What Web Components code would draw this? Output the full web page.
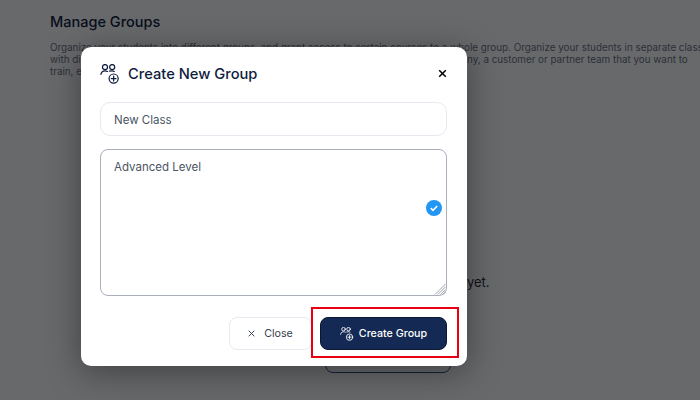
<!DOCTYPE html>
<html>
<head>
<meta charset="utf-8">
<title>Create New Group</title>
<style>
  html, body { margin: 0; height: 100%; }
  body { width: 700px; height: 400px; overflow: hidden; font-family: Inter, "Liberation Sans", sans-serif; }
</style>
</head>
<body>
<groups-page>
  <group-modal heading="Create New Group">
    <text-box>New Class</text-box>
    <text-box multiline>Advanced Level</text-box>
    <modal-button slot="footer" kind="ghost">Close</modal-button>
    <modal-button slot="footer" kind="primary">Create Group</modal-button>
  </group-modal>
</groups-page>

<script>
const groupIcon = `
  <svg viewBox="0 0 22 22" fill="none" stroke="currentColor" stroke-width="1.35" stroke-linecap="round">
    <circle cx="5.500" cy="3.400" r="2.800"/>
    <circle cx="13.400" cy="3.400" r="2.800"/>
    <path d="M1 11.500c.5-2.600 2-4 4.500-4 1.200 0 2 .2 2.800.7"/>
    <path d="M10.500 7.800c.8-.2 1.700-.3 2.700-.3 1 0 1.800.2 2.500.7"/>
    <circle cx="15" cy="16" r="5"/>
    <path d="M15 13.400v5.200M12.400 16h5.200"/>
  </svg>`;

// page behind the dialog
class GroupsPage extends HTMLElement {
  constructor() {
    super();
    this.attachShadow({ mode: 'open' });
    this.shadowRoot.innerHTML = `
      <style>
        :host { display: block; position: relative; width: 700px; height: 400px; overflow: hidden; background: #fff; }
        .content { width: 700px; box-sizing: border-box; padding: 12px 0 0 50px; }
        h1 { margin: 0; font-size: 14.500px; line-height: 19px; font-weight: 500; color: #0f1c3d; }
        p { margin: 10px 0 0; width: 760px; font-size: 9.830px; line-height: 12px; color: #6b7280; white-space: nowrap; }
        .empty { display: flex; flex-direction: column; align-items: center; margin: 195px 0 0 236px; width: 204px; }
        .empty span { font-size: 13px; line-height: 20px; color: #1f2937; white-space: nowrap; }
        .empty div { margin-top: 43px; width: 126px; height: 38px; box-sizing: border-box; border: 1px solid #2f4a86; border-radius: 8px; }
        .overlay { position: absolute; inset: 0; background: rgba(4,5,8,.6); }
        .mark { position: absolute; left: 311px; top: 307px; width: 148px; height: 51px; box-sizing: border-box; border: 2px solid #e60012; }
      </style>
      <div class="content">
        <h1>Manage Groups</h1>
        <p>Organize your students into different groups, and grant access to certain courses to a whole group. Organize your students in separate classes<br>
        with different skills, a department of your organization, a large division of staff or a company, a customer or partner team that you want to<br>
        train, educate and onboard.</p>
        <div class="empty">
          <span>You have not created groups yet.</span>
          <div></div>
        </div>
      </div>
      <div class="overlay"></div>
      <slot></slot>
      <div class="mark"></div>`;
  }
}

// white dialog with header, body and footer
class GroupModal extends HTMLElement {
  constructor() {
    super();
    this.attachShadow({ mode: 'open' });
    this.shadowRoot.innerHTML = `
      <style>
        :host { position: absolute; left: 81px; top: 47px; width: 386px; height: 319px; box-sizing: border-box; display: flex; flex-direction: column;
          padding: 14px 20px 16px 19px; background: #fff; border-radius: 10px; box-shadow: 0 6px 34px rgba(0,0,0,.4); }
        header { display: flex; align-items: center; height: 26px; color: #0f1c3d; }
        header .icon { width: 20px; height: 20px; margin-right: 8px; flex: none; display: flex; }
        h2 { margin: 0; flex: 1; font-size: 14.700px; font-weight: 500; line-height: 24px; color: #0f1c3d; }
        .x { width: 9px; height: 9px; color: #000; flex: none; margin-top: -2px; }
        .body { display: flex; flex-direction: column; gap: 13px; margin-top: 15px; }
        footer { display: flex; justify-content: flex-end; gap: 8px; margin-top: 21px; }
      </style>
      <header>
        <span class="icon">${groupIcon}</span>
        <h2></h2>
        <svg class="x" viewBox="0 0 9 9" stroke="currentColor" stroke-width="1.5" fill="none"><path d="M1.200 1.200l6.600 6.600M7.800 1.200l-6.600 6.600"/></svg>
      </header>
      <div class="body"><slot></slot></div>
      <footer><slot name="footer"></slot></footer>`;
    this.shadowRoot.querySelector('h2').textContent = this.getAttribute('heading');
  }
}

// single line field, or an area with a check badge and resize grip with the multiline attribute
class TextBox extends HTMLElement {
  constructor() {
    super();
    this.attachShadow({ mode: 'open' });
    this.shadowRoot.innerHTML = `
      <style>
        :host { display: block; position: relative; }
        .box { box-sizing: border-box; height: 34px; padding: 1px 13px 0; display: flex; align-items: center; font-size: 11.500px; color: #4b5563;
          border: 1px solid #e6e9f0; border-radius: 10px; background: #fff; }
        :host([multiline]) .box { display: block; height: 147px; padding: 9.500px 13px; line-height: 15px;
          border: 1.500px solid #a9aebb; border-radius: 8px; }
        .check, .grip { display: none; position: absolute; }
        .check { right: 5px; top: 51px; width: 16px; height: 16px; }
        .grip { right: 1px; bottom: 1px; width: 12px; height: 12px; }
        :host([multiline]) .check, :host([multiline]) .grip { display: block; }
      </style>
      <div class="box"><slot></slot></div>
      <svg class="check" viewBox="0 0 16 16"><circle cx="8" cy="8" r="8" fill="#2196f3"/><path d="M4.800 8.200l2.200 2.100 4.200-4.300" fill="none" stroke="#fff" stroke-width="1.600"/></svg>
      <svg class="grip" viewBox="0 0 12 12" stroke="#8d919a" stroke-width=".8"><path d="M11.500 1L1 11.500M11.500 3.800L3.800 11.500M11.500 6.600L6.600 11.500M11.500 9.200L9.200 11.500"/></svg>`;
  }
}

class ModalButton extends HTMLElement {
  constructor() {
    super();
    this.attachShadow({ mode: 'open' });
    const primary = this.getAttribute('kind') === 'primary';
    this.shadowRoot.innerHTML = `
      <style>
        :host { display: flex; align-items: center; justify-content: center; box-sizing: border-box; height: 33px; font-size: 10.700px;
          border-radius: 8px; }
        :host([kind=ghost]) { width: 83px; background: #fff; color: #374151; border: 1px solid #e8ebf1; gap: 9px; }
        :host([kind=primary]) { width: 127px; background: #142a54; color: #fff; border: 1px solid #0b1733; gap: 5px; font-weight: 500; }
        svg { flex: none; }
      </style>
      ${primary
        ? groupIcon.replace('<svg', '<svg width="14" height="14"')
        : '<svg width="7" height="7" viewBox="0 0 8 8" stroke="currentColor" stroke-width="1.100" fill="none"><path d="M.8.800l6.400 6.400M7.200.800L.8 7.200"/></svg>'}
      <slot></slot>`;
  }
}

customElements.define('groups-page', GroupsPage);
customElements.define('group-modal', GroupModal);
customElements.define('text-box', TextBox);
customElements.define('modal-button', ModalButton);
</script>
</body>
</html>
